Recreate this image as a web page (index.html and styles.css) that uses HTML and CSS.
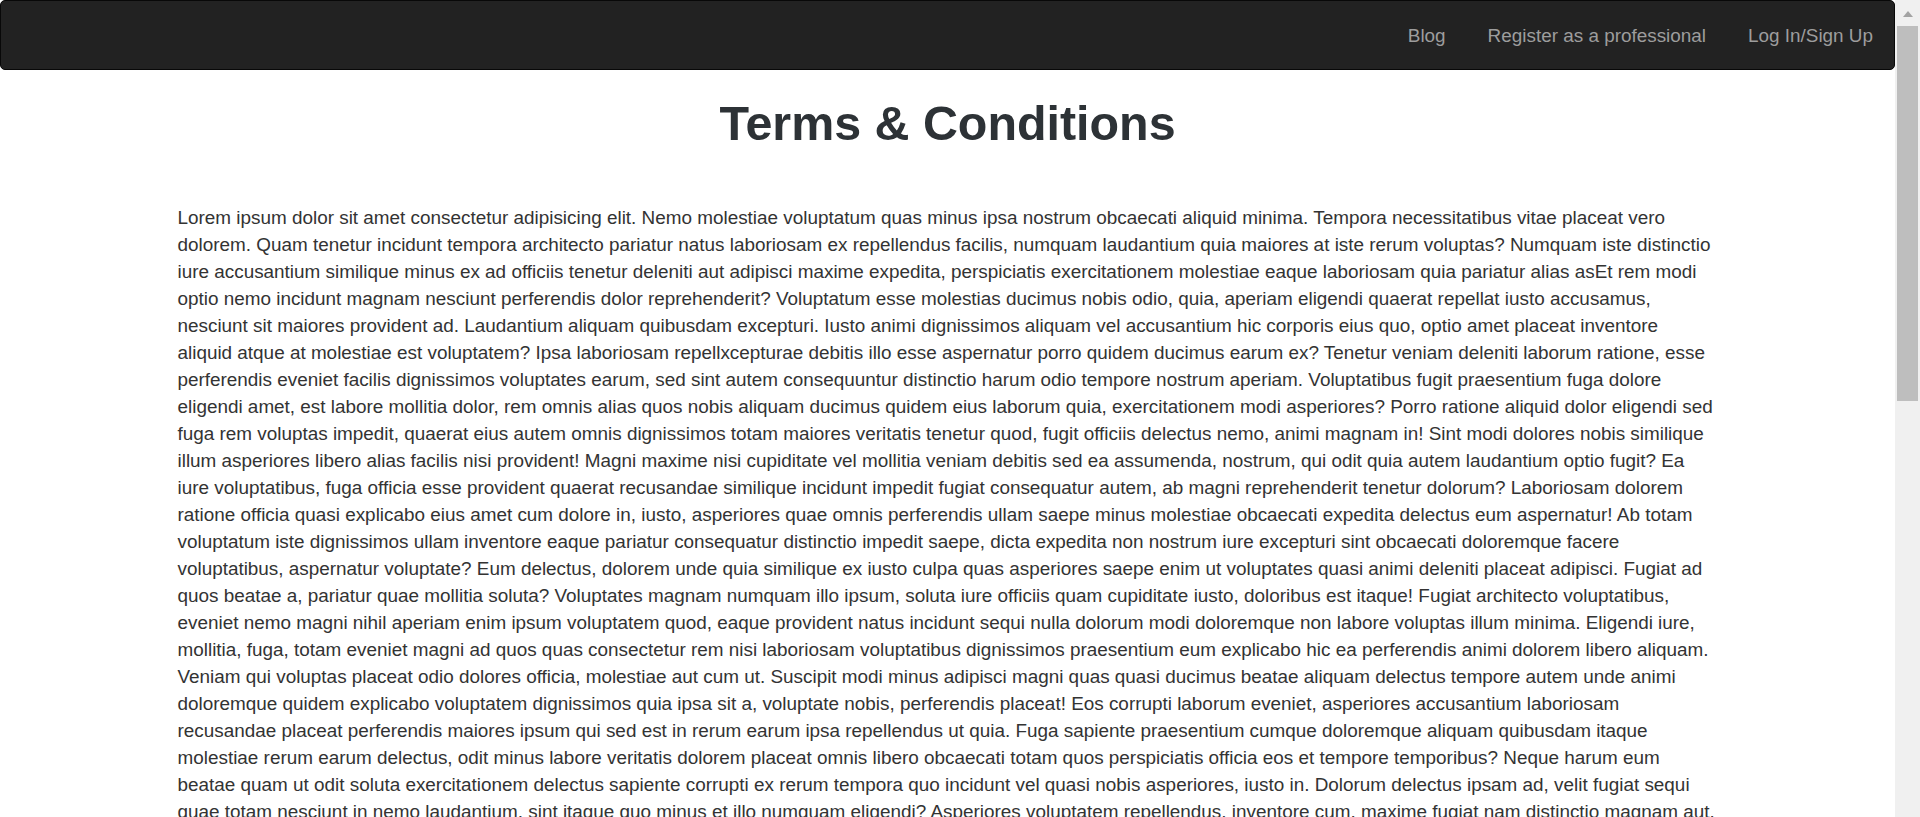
FILE: index.html
```html
<!DOCTYPE html>
<html lang="en">
<head>
<meta charset="utf-8">
<title>Terms &amp; Conditions</title>
<link rel="stylesheet" href="styles.css">
</head>
<body>
<div class="window">
  <div class="viewport">
    <nav class="navbar">
      <ul class="nav-links">
        <li><a class="nav-link" href="#">Blog</a></li>
        <li><a class="nav-link" href="#">Register as a professional</a></li>
        <li><a class="nav-link" href="#">Log In/Sign Up</a></li>
      </ul>
    </nav>
    <main class="page">
      <h1 class="page-title">Terms &amp; Conditions</h1>
      <div class="terms">
        <p class="terms-text">Lorem ipsum dolor sit amet consectetur adipisicing elit. Nemo molestiae voluptatum quas minus ipsa nostrum obcaecati aliquid minima. Tempora necessitatibus vitae placeat vero dolorem. Quam tenetur incidunt tempora architecto pariatur natus laboriosam ex repellendus facilis, numquam laudantium quia maiores at iste rerum voluptas? Numquam iste distinctio iure accusantium similique minus ex ad officiis tenetur deleniti aut adipisci maxime expedita, perspiciatis exercitationem molestiae eaque laboriosam quia pariatur alias asEt rem modi optio nemo incidunt magnam nesciunt perferendis dolor reprehenderit? Voluptatum esse molestias ducimus nobis odio, quia, aperiam eligendi quaerat repellat iusto accusamus, nesciunt sit maiores provident ad. Laudantium aliquam quibusdam excepturi. Iusto animi dignissimos aliquam vel accusantium hic corporis eius quo, optio amet placeat inventore aliquid atque at molestiae est voluptatem? Ipsa laboriosam repellxcepturae debitis illo esse aspernatur porro quidem ducimus earum ex? Tenetur veniam deleniti laborum ratione, esse perferendis eveniet facilis dignissimos voluptates earum, sed sint autem consequuntur distinctio harum odio tempore nostrum aperiam. Voluptatibus fugit praesentium fuga dolore eligendi amet, est labore mollitia dolor, rem omnis alias quos nobis aliquam ducimus quidem eius laborum quia, exercitationem modi asperiores? Porro ratione aliquid dolor eligendi sed fuga rem voluptas impedit, quaerat eius autem omnis dignissimos totam maiores veritatis tenetur quod, fugit officiis delectus nemo, animi magnam in! Sint modi dolores nobis similique illum asperiores libero alias facilis nisi provident! Magni maxime nisi cupiditate vel mollitia veniam debitis sed ea assumenda, nostrum, qui odit quia autem laudantium optio fugit? Ea iure voluptatibus, fuga officia esse provident quaerat recusandae similique incidunt impedit fugiat consequatur autem, ab magni reprehenderit tenetur dolorum? Laboriosam dolorem ratione officia quasi explicabo eius amet cum dolore in, iusto, asperiores quae omnis perferendis ullam saepe minus molestiae obcaecati expedita delectus eum aspernatur! Ab totam voluptatum iste dignissimos ullam inventore eaque pariatur consequatur distinctio impedit saepe, dicta expedita non nostrum iure excepturi sint obcaecati doloremque facere voluptatibus, aspernatur voluptate? Eum delectus, dolorem unde quia similique ex iusto culpa quas asperiores saepe enim ut voluptates quasi animi deleniti placeat adipisci. Fugiat ad quos beatae a, pariatur quae mollitia soluta? Voluptates magnam numquam illo ipsum, soluta iure officiis quam cupiditate iusto, doloribus est itaque! Fugiat architecto voluptatibus, eveniet nemo magni nihil aperiam enim ipsum voluptatem quod, eaque provident natus incidunt sequi nulla dolorum modi doloremque non labore voluptas illum minima. Eligendi iure, mollitia, fuga, totam eveniet magni ad quos quas consectetur rem nisi laboriosam voluptatibus dignissimos praesentium eum explicabo hic ea perferendis animi dolorem libero aliquam. Veniam qui voluptas placeat odio dolores officia, molestiae aut cum ut. Suscipit modi minus adipisci magni quas quasi ducimus beatae aliquam delectus tempore autem unde animi doloremque quidem explicabo voluptatem dignissimos quia ipsa sit a, voluptate nobis, perferendis placeat! Eos corrupti laborum eveniet, asperiores accusantium laboriosam recusandae placeat perferendis maiores ipsum qui sed est in rerum earum ipsa repellendus ut quia. Fuga sapiente praesentium cumque doloremque aliquam quibusdam itaque molestiae rerum earum delectus, odit minus labore veritatis dolorem placeat omnis libero obcaecati totam quos perspiciatis officia eos et tempore temporibus? Neque harum eum beatae quam ut odit soluta exercitationem delectus sapiente corrupti ex rerum tempora quo incidunt vel quasi nobis asperiores, iusto in. Dolorum delectus ipsam ad, velit fugiat sequi quae totam nesciunt in nemo laudantium, sint itaque quo minus et illo numquam eligendi? Asperiores voluptatem repellendus, inventore cum, maxime fugiat nam distinctio magnam aut. Quibusdam voluptates accusamus consequuntur laboriosam, recusandae sint ullam eaque iste deserunt placeat provident magni architecto, totam eveniet officiis nesciunt sequi dolore. Natus, harum dolores voluptatem cumque ipsa aliquam eius assumenda quidem obcaecati odio dolorum perspiciatis fugiat nisi repellat rem? Sapiente repellendus facere consequatur nam tempora, molestias beatae corporis quaerat voluptate repudiandae necessitatibus nostrum explicabo illo cupiditate! Reiciendis accusantium at nihil error ad, temporibus repellat quas laborum eum, hic ipsum nemo, iste dolores libero aliquam soluta dignissimos veritatis saepe quae mollitia eligendi.</p>
        <p class="terms-text">Nemo molestiae voluptatum quas minus ipsa nostrum obcaecati aliquid minima. Tempora necessitatibus vitae placeat vero dolorem. Quam tenetur incidunt tempora architecto pariatur natus laboriosam ex repellendus facilis, numquam laudantium quia maiores at iste rerum voluptas? Numquam iste distinctio iure accusantium similique minus ex ad officiis tenetur deleniti aut adipisci maxime expedita, perspiciatis exercitationem molestiae eaque laboriosam quia pariatur alias. Et rem modi optio nemo incidunt magnam nesciunt perferendis dolor reprehenderit? Voluptatum esse molestias ducimus nobis odio, quia, aperiam eligendi quaerat repellat iusto accusamus, nesciunt sit maiores provident ad. Laudantium aliquam quibusdam excepturi. Iusto animi dignissimos aliquam vel accusantium hic corporis eius quo, optio amet placeat inventore aliquid atque at molestiae est voluptatem? Ipsa laboriosam debitis illo esse aspernatur porro quidem ducimus earum ex? Tenetur veniam deleniti laborum ratione, esse perferendis eveniet facilis dignissimos voluptates earum, sed sint autem consequuntur distinctio harum odio tempore nostrum aperiam. Voluptatibus fugit praesentium fuga dolore eligendi amet, est labore mollitia dolor, rem omnis alias quos nobis aliquam ducimus quidem eius laborum quia, exercitationem modi asperiores? Porro ratione aliquid dolor eligendi sed fuga rem voluptas impedit, quaerat eius autem omnis dignissimos totam maiores veritatis tenetur quod, fugit officiis delectus nemo, animi magnam in! Sint modi dolores nobis similique illum asperiores libero alias facilis nisi provident! Magni maxime nisi cupiditate vel mollitia veniam debitis sed ea assumenda, nostrum, qui odit quia autem laudantium optio fugit? Ea iure voluptatibus, fuga officia esse provident quaerat recusandae similique incidunt impedit fugiat consequatur autem, ab magni reprehenderit tenetur dolorum? Laboriosam dolorem ratione officia quasi explicabo eius amet cum dolore in, iusto, asperiores quae omnis perferendis ullam saepe minus molestiae obcaecati expedita delectus eum aspernatur! Ab totam voluptatum iste dignissimos ullam inventore eaque pariatur consequatur distinctio impedit saepe, dicta expedita non nostrum iure excepturi sint obcaecati doloremque facere voluptatibus, aspernatur voluptate? Eum delectus, dolorem unde quia similique ex iusto culpa quas asperiores saepe enim ut voluptates quasi animi deleniti placeat adipisci. Fugiat ad quos beatae a, pariatur quae mollitia soluta? Voluptates magnam numquam illo ipsum, soluta iure officiis quam cupiditate iusto, doloribus est itaque! Fugiat architecto voluptatibus, eveniet nemo magni nihil aperiam enim ipsum voluptatem quod, eaque provident natus incidunt sequi nulla dolorum modi doloremque non labore voluptas illum minima. Eligendi iure, mollitia, fuga, totam eveniet magni ad quos quas consectetur rem nisi laboriosam voluptatibus dignissimos praesentium eum explicabo hic ea perferendis animi dolorem libero aliquam.</p>
      </div>
    </main>
  </div>
  <div class="scrollbar" aria-hidden="true">
    <div class="scrollbar-button"><span class="scrollbar-arrow"></span></div>
    <div class="scrollbar-track"><div class="scrollbar-thumb"></div></div>
  </div>
</div>
</body>
</html>
```
FILE: styles.css
```css
html,
body {
  margin: 0;
  background: #ffffff;
}

body {
  font-family: "Liberation Sans", Arial, Helvetica, sans-serif;
  color: #333333;
}

/* page area + window scrollbar */
.window {
  display: flex;
  align-items: flex-start;
}

.viewport {
  flex: 1;
  min-width: 0;
}

.scrollbar {
  position: sticky;
  top: 0;
  flex: none;
  display: flex;
  flex-direction: column;
  width: 25px;
  height: 100vh;
  background: #f0f0f0;
}

.scrollbar-button {
  display: flex;
  justify-content: center;
  align-items: flex-start;
  height: 25px;
  flex: none;
}

.scrollbar-arrow {
  width: 0;
  height: 0;
  margin-top: 11px;
  border-left: 5.5px solid transparent;
  border-right: 5.5px solid transparent;
  border-bottom: 6px solid #a3a3a3;
}

.scrollbar-track {
  flex: 1;
  padding: 1px 2px 0;
}

.scrollbar-thumb {
  height: 375px;
  background: #bebebe;
}

/* navbar */
.navbar {
  display: flex;
  justify-content: flex-end;
  align-items: center;
  box-sizing: border-box;
  height: 70px;
  background: #222222;
  border: 1px solid #080808;
  border-radius: 5px;
}

.nav-links {
  display: flex;
  align-items: center;
  margin: 0;
  padding: 0;
  list-style: none;
}

.nav-link {
  display: block;
  padding: 0 21px;
  font-size: 18.9px;
  line-height: 27px;
  color: #9d9d9d;
  text-decoration: none;
}

/* page content */
.page {
  padding-bottom: 40px;
}

.page-title {
  margin: 27px 0 0;
  font-size: 48.4px;
  line-height: 53px;
  font-weight: bold;
  text-align: center;
  color: #2d3236;
}

.terms {
  width: 1540px;
  margin: 54px auto 0;
}

.terms-text {
  margin: 0 0 27px;
  font-size: 18.9px;
  line-height: 27px;
  color: #333333;
}
```
